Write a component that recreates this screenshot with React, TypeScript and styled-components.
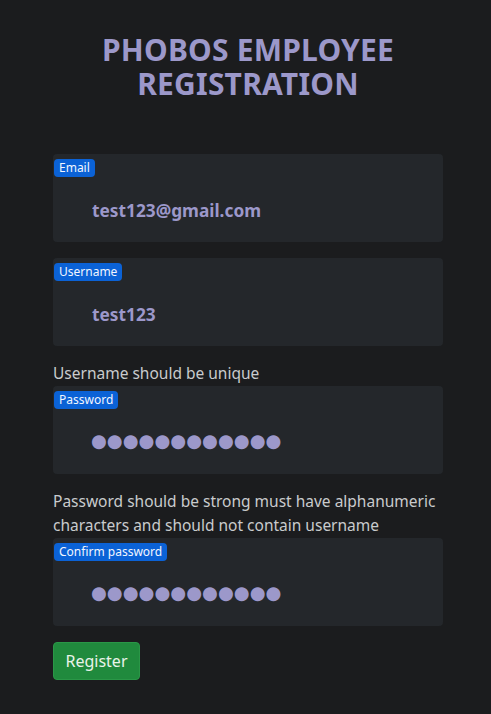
import React from "react";
import styled, { createGlobalStyle } from "styled-components";

const GlobalStyle = createGlobalStyle`
  body {
    margin: 0;
    background: #1b1c1e;
    font-family: "Noto Sans", "Open Sans", sans-serif;
  }
`;

const Page = styled.div`
  min-height: 714px;
  padding: 33px 48px 0 53px;
  box-sizing: border-box;
`;

const Title = styled.h1`
  margin: 0 0 53px;
  text-align: center;
  font-size: 30px;
  line-height: 34px;
  font-weight: 700;
  color: #9c98ca;
  letter-spacing: 0.2px;
`;

const Form = styled.form`
  display: flex;
  flex-direction: column;
  width: 390px;
`;

const Field = styled.div<{ $gap: number }>`
  display: flex;
  flex-direction: column;
  height: 88px;
  box-sizing: border-box;
  background: #24272b;
  border-radius: 4px;
  margin-bottom: ${(p) => p.$gap}px;
`;

const Badge = styled.label`
  align-self: flex-start;
  margin: 5px 0 0 1px;
  padding: 0 5px;
  height: 18px;
  line-height: 18px;
  font-size: 12px;
  color: #f2f6ff;
  background: #0b62d6;
  border-radius: 4px;
`;

const Input = styled.input<{ $dots?: boolean }>`
  margin: ${(p) => (p.$dots ? "16px" : "18px")} 0 0 ${(p) => (p.$dots ? "38px" : "39px")};
  padding: 0;
  border: none;
  outline: none;
  background: transparent;
  color: #9c98ca;
  font-family: ${(p) => (p.$dots ? '"DejaVu Sans", sans-serif' : "inherit")};
  font-weight: 700;
  font-size: ${(p) => (p.$dots ? "18.2px" : "17.3px")};
  letter-spacing: 0;
  height: 30px;
  width: 320px;
`;

const Help = styled.div`
  color: #c9cbcd;
  font-size: 15.5px;
  line-height: 24px;
  margin-bottom: 1px;
`;

const Button = styled.button`
  align-self: flex-start;
  width: 87px;
  height: 38px;
  background: #208a3d;
  border: 1px solid #2a9747;
  border-radius: 4px;
  color: #e9f3ea;
  font-family: inherit;
  font-size: 16px;
  cursor: pointer;
`;

const dots = "●●●●●●●●●●●●";

export default function App() {
  return (
    <Page>
      <GlobalStyle />
      <Title>
        PHOBOS EMPLOYEE
        <br />
        REGISTRATION
      </Title>
      <Form onSubmit={(e) => e.preventDefault()}>
        <Field $gap={16}>
          <Badge>Email</Badge>
          <Input defaultValue="test123@gmail.com" />
        </Field>
        <Field $gap={15}>
          <Badge>Username</Badge>
          <Input defaultValue="test123" />
        </Field>
        <Help>Username should be unique</Help>
        <Field $gap={15}>
          <Badge>Password</Badge>
          <Input $dots defaultValue={dots} readOnly />
        </Field>
        <Help>
          Password should be strong must have alphanumeric characters and
          should not contain username
        </Help>
        <Field $gap={16}>
          <Badge>Confirm password</Badge>
          <Input $dots defaultValue={dots} readOnly />
        </Field>
        <Button type="submit">Register</Button>
      </Form>
    </Page>
  );
}
